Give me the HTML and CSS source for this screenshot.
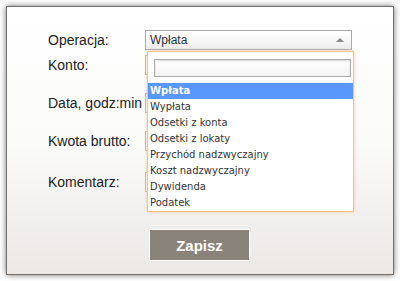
FILE: index.html
```html
<!DOCTYPE html>
<html>
<head>
    <meta charset="UTF-8">
    <title>Nowa operacja</title>
    <link rel="stylesheet" href="styles.css">
</head>
<body>
    <div class="window">
        <form class="form">
            <div class="row">
                <label>Operacja:</label>
                <div class="select">
                    <span>Wpłata</span>
                    <b class="arrow"></b>
                </div>
            </div>
            <div class="row row-near">
                <label>Konto:</label>
                <input class="field" type="text">
            </div>
            <div class="row">
                <label>Data, godz:min</label>
                <input class="field" type="text">
            </div>
            <div class="row">
                <label>Kwota brutto:</label>
                <input class="field" type="text">
            </div>
            <div class="row row-far">
                <label>Komentarz:</label>
                <input class="field" type="text">
            </div>
            <div class="actions">
                <button type="button" class="btn">Zapisz</button>
            </div>
        </form>

        <div class="dropdown">
            <div class="search">
                <input type="text">
            </div>
            <ul class="results">
                <li class="highlighted">Wpłata</li>
                <li>Wypłata</li>
                <li>Odsetki z konta</li>
                <li>Odsetki z lokaty</li>
                <li>Przychód nadzwyczajny</li>
                <li>Koszt nadzwyczajny</li>
                <li>Dywidenda</li>
                <li>Podatek</li>
            </ul>
        </div>
    </div>
</body>
</html>
```

FILE: styles.css
```css
html, body {
    margin: 0;
    padding: 0;
    background-color: #fff;
}
body {
    padding: 6px;
    font-family: "Liberation Sans", Arial, sans-serif;
}
.window {
    position: relative;
    height: 267px;
    border: 1px solid #6e6e6e;
    box-shadow: 0 0 6px rgba(0,0,0,0.55);
    background: linear-gradient(to bottom, #ffffff 0%, #fbfbfa 50%, #ebe8e5 100%);
}
.form {
    padding: 23px 0 0 41px;
    margin: 0;
}
.row {
    display: flex;
    align-items: center;
    height: 20px;
    margin-top: 18px;
}
.row:first-child {
    margin-top: 0;
}
.row.row-near {
    margin-top: 5px;
}
.row.row-far {
    margin-top: 21px;
}
.row label {
    flex: 0 0 97px;
    min-width: 0;
    white-space: nowrap;
    font-size: 14px;
    color: #222;
}
.select {
    box-sizing: border-box;
    width: 207px;
    height: 20px;
    border: 1px solid #aaa;
    background: linear-gradient(to bottom, #ffffff 0%, #f7f7f7 50%, #ececec 100%);
    display: flex;
    align-items: center;
    justify-content: space-between;
    padding: 0 7px 0 4px;
    font-size: 12px;
    color: #2a2f3a;
}
.arrow {
    width: 0;
    height: 0;
    border-left: 4px solid transparent;
    border-right: 4px solid transparent;
    border-bottom: 4px solid #888;
}
.field {
    box-sizing: border-box;
    width: 207px;
    height: 20px;
    border: 1px solid #c9b79c;
    background-color: #fff;
    margin: 0;
}
.actions {
    margin-top: 37px;
    padding-left: 101px;
}
.btn {
    box-sizing: border-box;
    width: 101px;
    height: 32px;
    border: 1px solid #fff;
    background-color: #8a837c;
    color: #fff;
    font-family: "Liberation Sans", Arial, sans-serif;
    font-weight: bold;
    font-size: 15px;
    padding: 0;
}
.dropdown {
    position: absolute;
    left: 140px;
    top: 44px;
    box-sizing: border-box;
    width: 207px;
    height: 161px;
    border: 1px solid #f2c28a;
    box-shadow: 0 0 3px rgba(240,170,90,0.6);
    background-color: #fff;
}
.search {
    padding: 7px 2px 0 6px;
}
.search input {
    box-sizing: border-box;
    display: block;
    width: 100%;
    height: 18px;
    margin: 0;
    border: 1px solid #aaa;
    box-shadow: inset 0 1px 2px rgba(0,0,0,0.15);
    background: linear-gradient(to bottom, #ffffff 0%, #f4f4f4 100%);
}
.results {
    list-style: none;
    margin: 6px 0 0 0;
    padding: 0;
}
.results li {
    height: 16px;
    line-height: 16px;
    padding-left: 2px;
    font-family: "DejaVu Sans", Verdana, sans-serif;
    font-size: 10px;
    color: #333;
}
.results li.highlighted {
    background-color: #5897fb;
    color: #fff;
    font-weight: bold;
}
```
